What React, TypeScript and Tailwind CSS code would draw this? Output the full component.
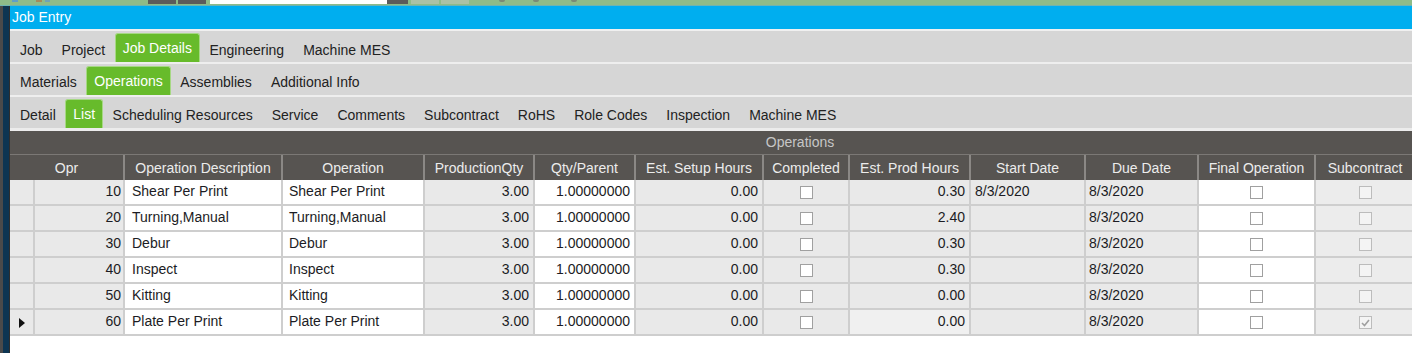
import React from "react";

const COLS =
  "grid grid-cols-[25px_90px_158px_142px_110px_101px_128px_86px_121px_115px_113px_117px_100px_174px]";

type Row = {
  opr: string;
  desc: string;
  prodQty: string;
  qtyParent: string;
  setup: string;
  prodHrs: string;
  start: string;
  due: string;
  sub: boolean;
  current?: boolean;
};

const rows: Row[] = [
  { opr: "10", desc: "Shear Per Print", prodQty: "3.00", qtyParent: "1.00000000", setup: "0.00", prodHrs: "0.30", start: "8/3/2020", due: "8/3/2020", sub: false },
  { opr: "20", desc: "Turning,Manual", prodQty: "3.00", qtyParent: "1.00000000", setup: "0.00", prodHrs: "2.40", start: "", due: "8/3/2020", sub: false },
  { opr: "30", desc: "Debur", prodQty: "3.00", qtyParent: "1.00000000", setup: "0.00", prodHrs: "0.30", start: "", due: "8/3/2020", sub: false },
  { opr: "40", desc: "Inspect", prodQty: "3.00", qtyParent: "1.00000000", setup: "0.00", prodHrs: "0.30", start: "", due: "8/3/2020", sub: false },
  { opr: "50", desc: "Kitting", prodQty: "3.00", qtyParent: "1.00000000", setup: "0.00", prodHrs: "0.00", start: "", due: "8/3/2020", sub: false },
  { opr: "60", desc: "Plate Per Print", prodQty: "3.00", qtyParent: "1.00000000", setup: "0.00", prodHrs: "0.00", start: "", due: "8/3/2020", sub: true, current: true },
];

function Tab({ label, active, pt }: { label: string; active?: boolean; pt: string }) {
  if (active) {
    return (
      <div className="mt-[2px] flex items-start rounded-t-[3px] border border-b-0 border-[#a6d884] bg-[#67bb2b] px-[7px] pt-[6px] text-white">
        <span className="leading-[16px]">{label}</span>
      </div>
    );
  }
  return (
    <div className={`px-[9.5px] ${pt} leading-[16px] text-[#222]`}>{label}</div>
  );
}

function TabRow({
  tabs,
  active,
  pt,
}: {
  tabs: string[];
  active: string;
  pt: string;
}) {
  return (
    <div className="flex h-[31px] items-stretch bg-[#d6d6d6] pl-[0.5px]">
      {tabs.map((t) => (
        <Tab key={t} label={t} active={t === active} pt={pt} />
      ))}
    </div>
  );
}

function CheckBox({ disabled, checked }: { disabled?: boolean; checked?: boolean }) {
  return (
    <div
      className={`flex h-[13px] w-[13px] items-center justify-center border ${
        disabled ? "border-[#bcbcbc] bg-[#f4f4f4]" : "border-[#a0a0a0] bg-white"
      }`}
    >
      {checked && (
        <svg width="9" height="8" viewBox="0 0 9 8">
          <path d="M1 4 L3.5 6.5 L8 1" fill="none" stroke="#a0a0a0" strokeWidth="1.6" />
        </svg>
      )}
    </div>
  );
}

const cell = "h-[26px] border-r-2 border-b-2 border-[#cecece] pt-[3px] leading-[16px] whitespace-nowrap overflow-hidden";
const gray = "bg-[#e9e9e9]";
const white = "bg-white";

export default function App() {
  return (
    <div className="h-[353px] w-[1412px] overflow-hidden bg-white font-['Liberation_Sans',Arial,sans-serif] text-[14px] text-[#1c1c24]">
      {/* top strip */}
      <div className="flex h-[6px] items-start border-b border-[#6fb3b0] bg-[#8ebb88]">
        <div className="ml-[12px] mt-0 h-[2px] w-[6px] bg-[#5f9fc7]" />
        <div className="ml-[18px] h-[2px] w-[6px] bg-[#a58a5a]" />
        <div className="ml-[3px] h-[2px] w-[5px] bg-[#6fa3b5]" />
        <div className="ml-[98px] h-[4px] w-[28px] bg-[#5b5b5b]" />
        <div className="ml-[2px] h-[4px] w-[28px] bg-[#5b5b5b]" />
        <div className="ml-[4px] h-[4px] w-[177px] bg-white" />
        <div className="h-[4px] w-[21px] bg-[#5b5b5b]" />
        <div className="ml-[3px] h-[4px] w-[28px] bg-[#a9c1a5]" />
        <div className="ml-[2px] h-[4px] w-[28px] bg-[#a9c1a5]" />
        <div className="ml-[30px] h-[2px] w-[6px] rounded-b-full bg-[#7a8a77]" />
        <div className="ml-[28px] h-[2px] w-[6px] rounded-b-full bg-[#7a8a77]" />
        <div className="ml-[32px] h-[2px] w-[6px] rounded-b-full bg-[#7a8a77]" />
      </div>

      <div className="flex h-[347px]">
        {/* left edge */}
        <div className="flex w-[10px] shrink-0">
          <div className="w-[3px] bg-[#4a4a4a]" />
          <div className="w-[6px] bg-[#0d3552]" />
          <div className="w-[1px] bg-[#2e2e2e]" />
        </div>

        {/* main */}
        <div className="flex min-w-0 flex-1 flex-col overflow-hidden">
          <div className="flex h-[23px] items-center bg-[#00aeef] pl-[2px] text-[14px] text-white">
            Job Entry
          </div>
          <div className="h-[2px] bg-[#f0f0f0]" />
          <TabRow
            tabs={["Job", "Project", "Job Details", "Engineering", "Machine MES"]}
            active="Job Details"
            pt="pt-[11px]"
          />
          <div className="h-[2px] bg-[#eeeeee]" />
          <TabRow
            tabs={["Materials", "Operations", "Assemblies", "Additional Info"]}
            active="Operations"
            pt="pt-[10px]"
          />
          <div className="h-[2px] bg-[#eeeeee]" />
          <TabRow
            tabs={[
              "Detail",
              "List",
              "Scheduling Resources",
              "Service",
              "Comments",
              "Subcontract",
              "RoHS",
              "Role Codes",
              "Inspection",
              "Machine MES",
            ]}
            active="List"
            pt="pt-[10px]"
          />
          <div className="h-[3px] bg-[#ececec]" />

          {/* grid */}
          <div className="w-[1580px]">
            <div className="flex h-[24px] items-center justify-center border-b border-[#7b7875] bg-[#575451] text-[#c6c6c6]">
              Operations
            </div>
            <div className={`${COLS} h-[25px] bg-[#575451] text-center text-[#ececec]`}>
              {[
                ["Opr", "col-span-2"],
                ["Operation Description", ""],
                ["Operation", ""],
                ["ProductionQty", ""],
                ["Qty/Parent", ""],
                ["Est. Setup Hours", ""],
                ["Completed", ""],
                ["Est. Prod Hours", ""],
                ["Start Date", ""],
                ["Due Date", ""],
                ["Final Operation", ""],
                ["Subcontract", ""],
                ["", ""],
              ].map(([h, extra], i) => (
                <div
                  key={i}
                  className={`${extra} overflow-hidden whitespace-nowrap border-r-2 border-[#8b8885] pt-[5px] leading-[16px]`}
                >
                  {h}
                </div>
              ))}
            </div>

            {rows.map((r) => (
              <div key={r.opr} className={COLS}>
                <div className={`${cell} ${gray} relative`}>
                  {r.current && (
                    <svg className="absolute left-[9px] top-[8px]" width="6" height="10" viewBox="0 0 6 10">
                      <path d="M0 0 L6 5 L0 10 Z" fill="#111" />
                    </svg>
                  )}
                </div>
                <div className={`${cell} ${gray} pr-[2px] text-right`}>{r.opr}</div>
                <div className={`${cell} ${white} pl-[7px]`}>{r.desc}</div>
                <div className={`${cell} ${white} pl-[6px]`}>{r.desc}</div>
                <div className={`${cell} ${gray} pr-[4px] text-right`}>{r.prodQty}</div>
                <div className={`${cell} ${white} pr-[4px] text-right`}>{r.qtyParent}</div>
                <div className={`${cell} ${gray} pr-[4px] text-right`}>{r.setup}</div>
                <div className={`${cell} ${gray} flex justify-center !pt-[6px]`}>
                  <CheckBox />
                </div>
                <div className={`${cell} ${r.current ? "bg-[#f0f0f0]" : gray} pr-[4px] text-right`}>
                  {r.prodHrs}
                </div>
                <div className={`${cell} ${gray} pl-[4px]`}>{r.start}</div>
                <div className={`${cell} ${gray} pl-[3px]`}>{r.due}</div>
                <div className={`${cell} ${white} flex justify-center !pt-[6px]`}>
                  <CheckBox />
                </div>
                <div className={`${cell} bg-[#ececec] flex justify-center !pt-[6px]`}>
                  <CheckBox disabled checked={r.sub} />
                </div>
                <div className={`${cell} ${gray}`} />
              </div>
            ))}
          </div>
          <div className="flex-1 bg-white" />
        </div>
      </div>
    </div>
  );
}
